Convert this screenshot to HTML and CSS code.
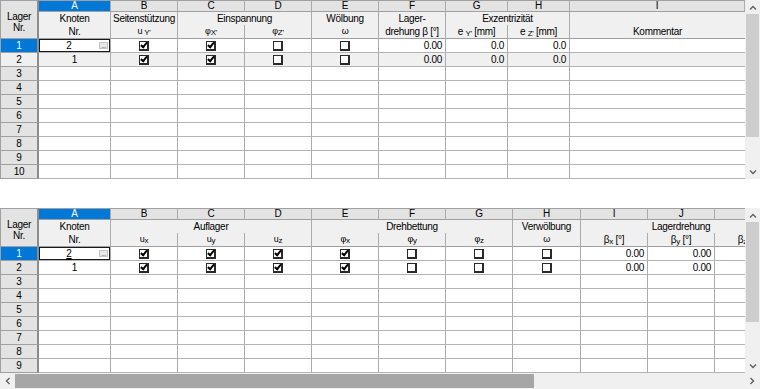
FILE: index.html
```html
<!DOCTYPE html>
<html lang="de">
<head>
  <meta charset="UTF-8" />
  <title>Lager</title>
  <link rel="stylesheet" href="styles.css">
</head>
<body>

  <!-- obere Tabelle -->
  <div class="pane">
    <div class="grid-wrap">
      <table class="grid grid-top">
        <colgroup>
          <col class="w-rh"><col class="w-a">
          <col class="w-67"><col class="w-67"><col class="w-67"><col class="w-67"><col class="w-67">
          <col class="w-62"><col class="w-62"><col class="w-175">
        </colgroup>
        <tr class="letters">
          <th class="corner" rowspan="3">Lager<br>Nr.</th>
          <th class="sel">A</th><th>B</th><th>C</th><th>D</th><th>E</th><th>F</th><th>G</th><th>H</th><th>I</th>
        </tr>
        <tr class="h1">
          <th>Knoten</th><th>Seitenstützung</th><th colspan="2">Einspannung</th><th>Wölbung</th>
          <th>Lager-</th><th colspan="2">Exzentrizität</th><th class="last"></th>
        </tr>
        <tr class="h2">
          <th>Nr.</th>
          <th class="sym">u <sub>Y'</sub></th>
          <th class="sym">φ<sub>X'</sub></th>
          <th class="sym">φ<sub>Z'</sub></th>
          <th class="sym">ω</th>
          <th>drehung β [°]</th>
          <th>e <sub>Y'</sub> [mm]</th>
          <th>e <sub>Z'</sub> [mm]</th>
          <th class="last">Kommentar</th>
        </tr>
        <tr class="row">
          <td class="rh sel">1</td>
          <td class="edit"><div class="edit-box"><span class="val">2</span><span class="dots">...</span></div></td>
          <td class="c"><span class="cb on"></span></td>
          <td class="c"><span class="cb on"></span></td>
          <td class="c"><span class="cb"></span></td>
          <td class="c"><span class="cb"></span></td>
          <td class="num">0.00</td><td class="num">0.0</td><td class="num">0.0</td><td class="last"></td>
        </tr>
        <tr class="row alt">
          <td class="rh">2</td>
          <td class="c">1</td>
          <td class="c"><span class="cb on"></span></td>
          <td class="c"><span class="cb on"></span></td>
          <td class="c"><span class="cb"></span></td>
          <td class="c"><span class="cb"></span></td>
          <td class="num">0.00</td><td class="num">0.0</td><td class="num">0.0</td><td class="last"></td>
        </tr>
        <tr class="row"><td class="rh">3</td><td></td><td></td><td></td><td></td><td></td><td></td><td></td><td></td><td class="last"></td></tr>
        <tr class="row"><td class="rh">4</td><td></td><td></td><td></td><td></td><td></td><td></td><td></td><td></td><td class="last"></td></tr>
        <tr class="row"><td class="rh">5</td><td></td><td></td><td></td><td></td><td></td><td></td><td></td><td></td><td class="last"></td></tr>
        <tr class="row"><td class="rh">6</td><td></td><td></td><td></td><td></td><td></td><td></td><td></td><td></td><td class="last"></td></tr>
        <tr class="row"><td class="rh">7</td><td></td><td></td><td></td><td></td><td></td><td></td><td></td><td></td><td class="last"></td></tr>
        <tr class="row"><td class="rh">8</td><td></td><td></td><td></td><td></td><td></td><td></td><td></td><td></td><td class="last"></td></tr>
        <tr class="row"><td class="rh">9</td><td></td><td></td><td></td><td></td><td></td><td></td><td></td><td></td><td class="last"></td></tr>
        <tr class="row"><td class="rh">10</td><td></td><td></td><td></td><td></td><td></td><td></td><td></td><td></td><td class="last"></td></tr>
      </table>
    </div>
    <div class="vscroll">
      <div class="arrow"><svg width="8" height="5" viewBox="0 0 8 5"><path d="M1 4.5L4 1.5L7 4.5" /></svg></div>
      <div class="thumb thumb-top"></div>
      <div class="track"></div>
      <div class="arrow"><svg width="8" height="5" viewBox="0 0 8 5"><path d="M1 0.5L4 3.5L7 0.5" /></svg></div>
    </div>
  </div>

  <!-- untere Tabelle -->
  <div class="lower">
    <div class="pane">
      <div class="grid-wrap">
        <table class="grid grid-bottom">
          <colgroup>
            <col class="w-rh"><col class="w-a">
            <col class="w-67"><col class="w-67"><col class="w-67"><col class="w-67"><col class="w-67"><col class="w-67">
            <col class="w-68"><col class="w-67"><col class="w-67"><col class="w-67">
          </colgroup>
          <tr class="letters">
            <th class="corner" rowspan="3">Lager<br>Nr.</th>
            <th class="sel">A</th><th>B</th><th>C</th><th>D</th><th>E</th><th>F</th><th>G</th><th>H</th><th>I</th><th>J</th><th>K</th>
          </tr>
          <tr class="h1">
            <th>Knoten</th><th colspan="3">Auflager</th><th colspan="3">Drehbettung</th>
            <th>Verwölbung</th><th colspan="3">Lagerdrehung</th>
          </tr>
          <tr class="h2">
            <th>Nr.</th>
            <th class="sym">u<sub>x</sub></th><th class="sym">u<sub>y</sub></th><th class="sym">u<sub>z</sub></th>
            <th class="sym">φ<sub>x</sub></th><th class="sym">φ<sub>y</sub></th><th class="sym">φ<sub>z</sub></th>
            <th class="sym">ω</th>
            <th>β<sub>x</sub> [°]</th><th>β<sub>y</sub> [°]</th><th>β<sub>z</sub> [°]</th>
          </tr>
          <tr class="row">
            <td class="rh sel">1</td>
            <td class="edit"><div class="edit-box"><span class="val"><span class="caret">2</span></span><span class="dots">...</span></div></td>
            <td class="c"><span class="cb on"></span></td>
            <td class="c"><span class="cb on"></span></td>
            <td class="c"><span class="cb on"></span></td>
            <td class="c"><span class="cb on"></span></td>
            <td class="c"><span class="cb"></span></td>
            <td class="c"><span class="cb"></span></td>
            <td class="c"><span class="cb"></span></td>
            <td class="num">0.00</td><td class="num">0.00</td><td></td>
          </tr>
          <tr class="row">
            <td class="rh">2</td>
            <td class="c">1</td>
            <td class="c"><span class="cb on"></span></td>
            <td class="c"><span class="cb on"></span></td>
            <td class="c"><span class="cb on"></span></td>
            <td class="c"><span class="cb on"></span></td>
            <td class="c"><span class="cb"></span></td>
            <td class="c"><span class="cb"></span></td>
            <td class="c"><span class="cb"></span></td>
            <td class="num">0.00</td><td class="num">0.00</td><td></td>
          </tr>
          <tr class="row"><td class="rh">3</td><td></td><td></td><td></td><td></td><td></td><td></td><td></td><td></td><td></td><td></td><td></td></tr>
          <tr class="row"><td class="rh">4</td><td></td><td></td><td></td><td></td><td></td><td></td><td></td><td></td><td></td><td></td><td></td></tr>
          <tr class="row"><td class="rh">5</td><td></td><td></td><td></td><td></td><td></td><td></td><td></td><td></td><td></td><td></td><td></td></tr>
          <tr class="row"><td class="rh">6</td><td></td><td></td><td></td><td></td><td></td><td></td><td></td><td></td><td></td><td></td><td></td></tr>
          <tr class="row"><td class="rh">7</td><td></td><td></td><td></td><td></td><td></td><td></td><td></td><td></td><td></td><td></td><td></td></tr>
          <tr class="row"><td class="rh">8</td><td></td><td></td><td></td><td></td><td></td><td></td><td></td><td></td><td></td><td></td><td></td></tr>
          <tr class="row"><td class="rh">9</td><td></td><td></td><td></td><td></td><td></td><td></td><td></td><td></td><td></td><td></td><td></td></tr>
        </table>
      </div>
      <div class="vscroll">
        <div class="arrow"><svg width="8" height="5" viewBox="0 0 8 5"><path d="M1 4.5L4 1.5L7 4.5" /></svg></div>
        <div class="thumb thumb-bottom"></div>
        <div class="track"></div>
        <div class="arrow"><svg width="8" height="5" viewBox="0 0 8 5"><path d="M1 0.5L4 3.5L7 0.5" /></svg></div>
      </div>
    </div>
    <div class="hscroll">
      <div class="harrow"><svg width="5" height="8" viewBox="0 0 5 8"><path d="M4.5 1L1.5 4L4.5 7" /></svg></div>
      <div class="hthumb"></div>
      <div class="track"></div>
      <div class="harrow"><svg width="5" height="8" viewBox="0 0 5 8"><path d="M0.5 1L3.5 4L0.5 7" /></svg></div>
    </div>
  </div>

</body>
</html>
```

FILE: styles.css
```css
body {
  margin: 0;
  width: 760px;
  font-family: 'Liberation Sans', Arial, sans-serif;
  font-size: 10px;
  letter-spacing: -0.3px;
  color: #000;
  background-color: #fff;
}

.pane {
  display: flex;
}

.lower {
  margin-top: 29px;
}

.grid-wrap {
  width: 745px;
  overflow: hidden;
}

.grid {
  border-collapse: separate;
  border-spacing: 0;
  table-layout: fixed;
}

.grid-top {
  width: 745px;
}

.grid-bottom {
  width: 782px;
}

.w-rh { width: 39px; }
.w-a { width: 72px; }
.w-62 { width: 62px; }
.w-67 { width: 67px; }
.w-68 { width: 68px; }
.w-175 { width: 175px; }

.grid th,
.grid td {
  padding: 0;
  font-weight: normal;
  white-space: nowrap;
  overflow: hidden;
  border-right: 1px solid #ababab;
  line-height: 11px;
}

.grid .last {
  border-right: none;
}

/* Spaltenbuchstaben */
.letters {
  height: 12px;
}

.letters th {
  background-color: #e3e3e3;
  border-top: 1px solid #a0a0a0;
  border-bottom: 1px solid #a0a0a0;
  line-height: 10px;
  text-align: center;
}

.letters th.sel {
  background-color: #0078d7;
  color: #fff;
}

.grid .corner {
  background-color: #e3e3e3;
  border-left: 1px solid #a0a0a0;
  border-bottom: 1px solid #a0a0a0;
  border-right: 2px solid #8c8c8c;
  vertical-align: bottom;
  padding-bottom: 5px;
  text-align: center;
  line-height: 11px;
}

/* Kopfzeilen */
.h1 {
  height: 13px;
}

.h2 {
  height: 14px;
}

.h1 th,
.h2 th {
  background-color: #f0f0f0;
  text-align: center;
}

.h2 th {
  border-bottom: 1px solid #a0a0a0;
}

.sym {
  font-size: 9px;
}

sub {
  font-size: 8px;
  vertical-align: -1px;
  line-height: 0;
}

/* Datenzeilen */
.row {
  height: 14px;
}

.row td {
  background-color: #fff;
  border-bottom: 1px solid #b4b4b4;
}

.row.alt td {
  background-color: #f0f0f0;
}

.grid .rh {
  background-color: #e3e3e3;
  border-left: 1px solid #a0a0a0;
  border-bottom: 1px solid #a0a0a0;
  border-right: 2px solid #8c8c8c;
  text-align: center;
}

.grid .rh.sel {
  background-color: #0078d7;
  color: #fff;
}

.c {
  text-align: center;
}

.num {
  text-align: right;
  padding-right: 3px !important;
}

.edit {
  box-shadow: inset 0 0 0 1px #1a1a1a;
}

.edit-box {
  display: flex;
  align-items: center;
  height: 13px;
}

.val {
  flex: 1;
  text-align: center;
}

.caret {
  text-decoration: underline;
  text-decoration-thickness: 2px;
}

.dots {
  width: 9px;
  height: 7px;
  margin-right: 2px;
  background-color: #e6e6e6;
  border: 1px solid #c4c4c4;
  font-size: 7px;
  line-height: 5px;
  letter-spacing: -0.5px;
  text-align: center;
  color: #555;
  box-sizing: border-box;
  overflow: hidden;
}

/* Kontrollkästchen */
.cb {
  display: inline-block;
  position: relative;
  width: 10px;
  height: 10px;
  box-sizing: border-box;
  border: 1px solid #2a2a2a;
  border-right-width: 2px;
  border-bottom-width: 2px;
  background-color: #fff;
  vertical-align: middle;
}

.cb.on::after {
  content: "";
  position: absolute;
  left: 2px;
  top: -1px;
  width: 2px;
  height: 5px;
  border: solid #000;
  border-width: 0 2px 2px 0;
  transform: rotate(40deg);
}

/* Bildlaufleisten */
.vscroll {
  width: 15px;
  background-color: #f0f0f0;
  display: flex;
  flex-direction: column;
}

.arrow {
  height: 14px;
  display: flex;
  align-items: center;
  justify-content: center;
}

.thumb {
  margin: 0 1px;
  background-color: #cdcdcd;
}

.thumb-top {
  height: 123px;
}

.thumb-bottom {
  height: 100px;
}

.track {
  flex: 1;
}

.hscroll {
  height: 16px;
  display: flex;
  background-color: #f0f0f0;
}

.harrow {
  width: 15px;
  display: flex;
  align-items: center;
  justify-content: center;
}

.hthumb {
  width: 519px;
  margin: 1px 0;
  background-color: #a6a6a6;
}

svg path {
  fill: none;
  stroke: #606060;
  stroke-width: 1.4;
}
```
